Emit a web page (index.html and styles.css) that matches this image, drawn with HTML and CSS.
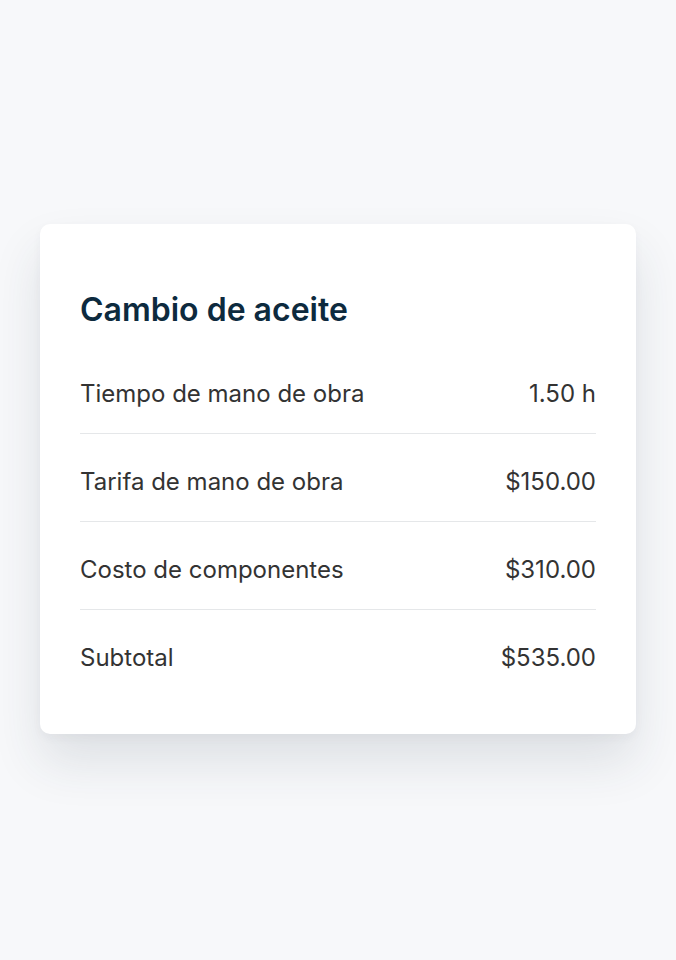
FILE: index.html
```html
<!DOCTYPE html>
<html lang="es">
<head>
<meta charset="utf-8">
<link rel="stylesheet" href="styles.css">
</head>
<body>
<main class="page">
  <section class="card">
    <h1 class="title">Cambio de aceite</h1>
    <div class="rows">
      <div class="row"><span>Tiempo de mano de obra</span><span>1.50 h</span></div>
      <div class="row"><span>Tarifa de mano de obra</span><span>$150.00</span></div>
      <div class="row"><span>Costo de componentes</span><span>$310.00</span></div>
      <div class="row"><span>Subtotal</span><span>$535.00</span></div>
    </div>
  </section>
</main>
</body>
</html>
```
FILE: styles.css
```css
html, body {
  margin: 0;
  padding: 0;
  background: #f7f8fa;
  font-family: Inter, "Noto Sans", sans-serif;
}
.page {
  min-height: 960px;
  box-sizing: border-box;
  padding: 224px 40px 0;
}
.card {
  background: #ffffff;
  border-radius: 10px;
  padding: 68px 40px 37px;
  box-shadow: 0 28px 50px rgba(40, 55, 70, 0.12), 0 4px 10px rgba(40, 55, 70, 0.04);
}
.title {
  margin: 0 0 18px;
  font-size: 32px;
  line-height: 36px;
  font-weight: 600;
  color: #0d2a3e;
}
.row {
  display: flex;
  justify-content: space-between;
  padding: 34px 0 25px;
  font-size: 24px;
  line-height: 28px;
  color: #333333;
  border-bottom: 1px solid #e5e7e9;
}
.row:last-child {
  border-bottom: none;
}
```
